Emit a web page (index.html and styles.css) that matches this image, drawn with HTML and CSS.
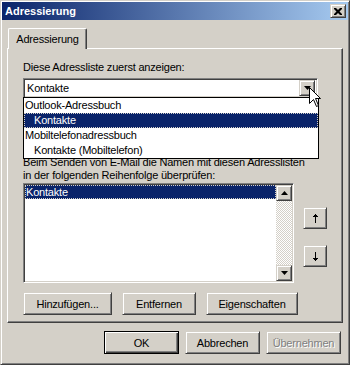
FILE: index.html
```html
<!DOCTYPE html>
<html lang="de">
<head>
  <meta charset="UTF-8" />
  <title>Adressierung</title>
  <link rel="stylesheet" href="styles.css">
</head>
<body>

  <div class="window">
    <!-- Titelleiste -->
    <div class="titlebar">
      <span class="title">Adressierung</span>
      <div class="close">
        <svg width="8" height="7" viewBox="0 0 8 7"><path d="M0 0h2l2 2 2-2h2v1l-2.5 2.5L8 6v1H6L4 5 2 7H0V6l2.5-2.5L0 1z" fill="#000"/></svg>
      </div>
    </div>

    <div class="dialog">
      <div class="tabs">
        <div class="tab">Adressierung</div>
      </div>

      <div class="panel">
        <div class="label">Diese Adressliste zuerst anzeigen:</div>

        <div class="combo">
          <div class="combo-value">Kontakte</div>
          <div class="combo-btn">
            <svg width="7" height="4" viewBox="0 0 7 4"><path d="M0 0h7L3.5 4z" fill="#000"/></svg>
          </div>

          <!-- aufgeklappte Liste -->
          <div class="dropdown">
            <div class="drop-item">Outlook-Adressbuch</div>
            <div class="drop-item sub selected">Kontakte</div>
            <div class="drop-item">Mobiltelefonadressbuch</div>
            <div class="drop-item sub">Kontakte (Mobiltelefon)</div>
          </div>

          <svg class="cursor" width="13" height="20" viewBox="0 0 13 20">
            <path d="M0.5 0.5V16.5L4.5 12.5L7.5 19.5L9.5 18.5L6.5 11.5H11.5Z" fill="#fff" stroke="#000" stroke-width="1"/>
          </svg>
        </div>

        <div class="label label-order">
          Beim Senden von E-Mail die Namen mit diesen Adresslisten<br>
          in der folgenden Reihenfolge überprüfen:
        </div>

        <div class="order-row">
          <div class="listbox">
            <div class="list-items">
              <div class="list-item selected">Kontakte</div>
            </div>
            <div class="scrollbar">
              <div class="scroll-btn">
                <svg width="7" height="4" viewBox="0 0 7 4"><path d="M3.5 0L7 4H0z" fill="#000"/></svg>
              </div>
              <div class="scroll-track"></div>
              <div class="scroll-btn">
                <svg width="7" height="4" viewBox="0 0 7 4"><path d="M0 0h7L3.5 4z" fill="#000"/></svg>
              </div>
            </div>
          </div>

          <div class="move-buttons">
            <div class="btn move-btn">
              <svg width="5" height="9" viewBox="0 0 5 9"><path d="M2 0h1v1h1v1h1v1H3v6H2V3H0V2h1V1h1z" fill="#000"/></svg>
            </div>
            <div class="btn move-btn">
              <svg width="5" height="9" viewBox="0 0 5 9"><path d="M2 0h1v6h2v1H4v1H3v1H2V8H1V7H0V6h2z" fill="#000"/></svg>
            </div>
          </div>
        </div>

        <div class="panel-buttons">
          <div class="btn btn-add">Hinzufügen...</div>
          <div class="btn btn-remove">Entfernen</div>
          <div class="btn btn-props">Eigenschaften</div>
        </div>
      </div>

      <div class="dialog-buttons">
        <div class="btn btn-default">OK</div>
        <div class="btn">Abbrechen</div>
        <div class="btn disabled">Übernehmen</div>
      </div>
    </div>
  </div>

</body>
</html>
```

FILE: styles.css
```css
body {
  margin: 0;
  background: #d4d0c8;
  font-family: "Liberation Sans", Arial, sans-serif;
  font-size: 11px;
  letter-spacing: -0.2px;
  color: #000;
}

.window {
  width: 350px;
  height: 365px;
  box-sizing: border-box;
  padding: 1px;
  border: 1px solid;
  border-color: #d4d0c8 #404040 #404040 #d4d0c8;
  box-shadow: inset 1px 1px #fff, inset -1px -1px #808080;
  background: #d4d0c8;
}

/* TITELLEISTE */
.titlebar {
  height: 18px;
  display: flex;
  align-items: center;
  justify-content: space-between;
  padding: 0 2px 0 3px;
  background: linear-gradient(to right, #0a246a, #a6caf0);
}

.title {
  color: #fff;
  font-weight: bold;
  font-size: 11px;
  letter-spacing: 0;
}

.close {
  width: 16px;
  height: 14px;
  box-sizing: border-box;
  display: flex;
  align-items: center;
  justify-content: center;
  background: #d4d0c8;
  border: 1px solid;
  border-color: #d4d0c8 #404040 #404040 #d4d0c8;
  box-shadow: inset 1px 1px #fff, inset -1px -1px #808080;
}

/* DIALOG */
.dialog {
  padding: 8px 5px 0 5px;
}

.tabs {
  display: flex;
  position: relative;
  z-index: 1;
  margin-bottom: -1px;
}

.tab {
  margin-left: 1px;
  width: 79px;
  height: 21px;
  box-sizing: border-box;
  padding-top: 4px;
  text-align: center;
  background: #d4d0c8;
  border-top: 1px solid #fff;
  border-left: 1px solid #fff;
  border-right: 1px solid #404040;
  box-shadow: inset -1px 0 #808080;
  border-radius: 2px 2px 0 0;
}

.panel {
  height: 275px;
  box-sizing: border-box;
  padding: 12px 15px 0 15px;
  border: 1px solid;
  border-color: #fff #404040 #404040 #fff;
  box-shadow: inset -1px -1px #808080;
}

.label {
  line-height: 13px;
  white-space: nowrap;
}

/* COMBOBOX */
.combo {
  position: relative;
  margin-top: 4px;
  width: 295px;
  height: 20px;
  box-sizing: border-box;
  display: flex;
  align-items: center;
  background: #fff;
  border: 1px solid;
  border-color: #808080 #fff #fff #808080;
  box-shadow: inset 1px 1px #404040, inset -1px -1px #d4d0c8;
  padding: 2px;
}

.combo-value {
  flex: 1;
  padding-left: 1px;
}

.combo-btn {
  width: 16px;
  height: 16px;
  box-sizing: border-box;
  display: flex;
  align-items: center;
  justify-content: center;
  background: #d4d0c8;
  border: 1px solid;
  border-color: #d4d0c8 #404040 #404040 #d4d0c8;
  box-shadow: inset 1px 1px #fff, inset -1px -1px #808080;
}

.dropdown {
  position: absolute;
  top: 18px;
  left: -1px;
  width: 296px;
  height: 62px;
  box-sizing: border-box;
  background: #fff;
  border: 1px solid #000;
  z-index: 2;
}

.drop-item {
  height: 15px;
  line-height: 15px;
  padding-left: 1px;
  white-space: nowrap;
}

.drop-item.sub {
  padding-left: 10px;
}

.selected {
  background: #0a246a;
  color: #fff;
  outline: 1px dotted #d4d0c8;
  outline-offset: -1px;
}

.cursor {
  position: absolute;
  left: 285px;
  top: 8px;
  z-index: 3;
}

/* REIHENFOLGE */
.label-order {
  margin-top: 58px;
}

.order-row {
  display: flex;
  margin-top: 1px;
}

.listbox {
  width: 271px;
  height: 100px;
  box-sizing: border-box;
  display: flex;
  background: #fff;
  border: 1px solid;
  border-color: #808080 #fff #fff #808080;
  box-shadow: inset 1px 1px #404040, inset -1px -1px #d4d0c8;
  padding: 1px;
}

.list-items {
  flex: 1;
}

.list-item {
  height: 14px;
  line-height: 14px;
  padding-left: 1px;
}

.scrollbar {
  width: 16px;
  display: flex;
  flex-direction: column;
}

.scroll-btn {
  width: 16px;
  height: 16px;
  box-sizing: border-box;
  display: flex;
  align-items: center;
  justify-content: center;
  background: #d4d0c8;
  border: 1px solid;
  border-color: #d4d0c8 #404040 #404040 #d4d0c8;
  box-shadow: inset 1px 1px #fff, inset -1px -1px #808080;
}

.scroll-track {
  flex: 1;
  background-color: #fff;
  background-image: repeating-conic-gradient(#d4d0c8 0 25%, #fff 0 50%);
  background-size: 2px 2px;
}

.move-buttons {
  margin-left: 9px;
  padding-top: 24px;
  display: flex;
  flex-direction: column;
  gap: 16px;
}

/* BUTTONS */
.btn {
  height: 23px;
  box-sizing: border-box;
  display: flex;
  align-items: center;
  justify-content: center;
  background: #d4d0c8;
  border: 1px solid;
  border-color: #d4d0c8 #404040 #404040 #d4d0c8;
  box-shadow: inset 1px 1px #fff, inset -1px -1px #808080;
}

.move-btn {
  width: 24px;
  height: 22px;
}

.panel-buttons {
  display: flex;
  gap: 10px;
  margin-top: 9px;
}

.btn-add { width: 89px; }
.btn-remove { width: 74px; }
.btn-props { width: 92px; }

.dialog-buttons {
  display: flex;
  justify-content: flex-end;
  gap: 6px;
  margin-top: 8px;
  padding-right: 2px;
}

.dialog-buttons .btn {
  width: 75px;
}

.btn-default {
  border-color: #000;
  box-shadow: inset 1px 1px #fff, inset -1px -1px #404040, inset -2px -2px #808080;
}

.disabled {
  color: #808080;
  text-shadow: 1px 1px #fff;
}
```
